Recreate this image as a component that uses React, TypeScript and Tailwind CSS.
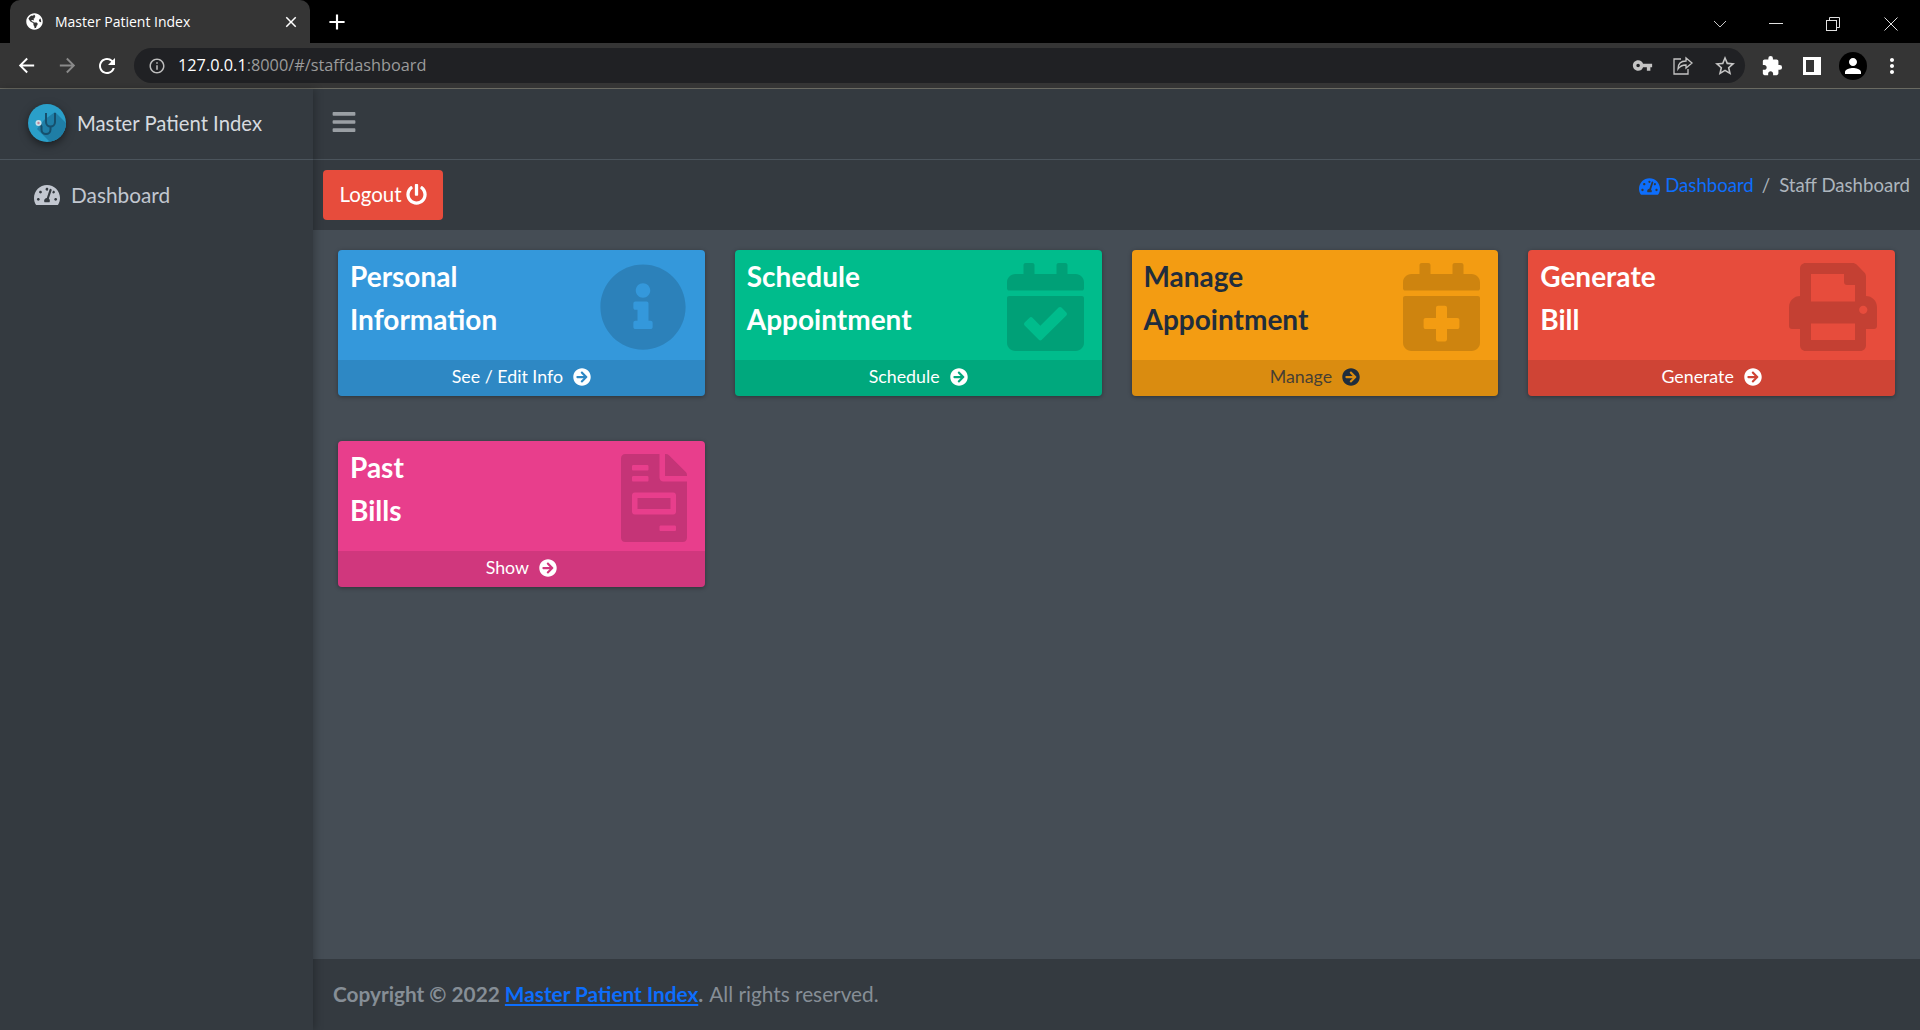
import { ReactNode } from 'react';
import {
  FaArrowCircleRight,
  FaBars,
  FaCalendarCheck,
  FaCalendarPlus,
  FaFileInvoice,
  FaGlobeAmericas,
  FaInfoCircle,
  FaPowerOff,
  FaPrint,
  FaTachometerAlt,
} from 'react-icons/fa';
import {
  MdAdd,
  MdArrowBack,
  MdArrowForward,
  MdClose,
  MdExtension,
  MdMoreVert,
  MdOutlineInfo,
  MdOutlineStarBorder,
  MdPerson,
  MdRefresh,
  MdVpnKey,
} from 'react-icons/md';

type Card = {
  title: [string, string];
  link: string;
  icon: ReactNode;
  bg: string;
  dark?: boolean;
};

const cards: Card[] = [
  {
    title: ['Personal', 'Information'],
    link: 'See / Edit Info',
    icon: <FaInfoCircle className="h-[88px] w-[88px]" />,
    bg: 'bg-[#3498db]',
  },
  {
    title: ['Schedule', 'Appointment'],
    link: 'Schedule',
    icon: <FaCalendarCheck className="h-[88px] w-[77px]" />,
    bg: 'bg-[#00bc8c]',
  },
  {
    title: ['Manage', 'Appointment'],
    link: 'Manage',
    icon: <FaCalendarPlus className="h-[88px] w-[77px]" />,
    bg: 'bg-[#f39c12]',
    dark: true,
  },
  {
    title: ['Generate', 'Bill'],
    link: 'Generate',
    icon: <FaPrint className="h-[88px] w-[88px]" />,
    bg: 'bg-[#e74c3c]',
  },
  {
    title: ['Past', 'Bills'],
    link: 'Show',
    icon: <FaFileInvoice className="h-[88px] w-[66px]" />,
    bg: 'bg-[#e83e8c]',
  },
];

function SmallBox({ card }: { card: Card }) {
  const textColor = card.dark ? 'text-[#1f2d3d]' : 'text-white';
  return (
    <div className={`relative h-[146px] overflow-hidden rounded-[4px] shadow-[0_1px_4px_rgba(0,0,0,0.35)] ${card.bg} ${textColor}`}>
      <div className="h-[110px] px-3 pt-[5px] text-[28px] leading-[43px] font-bold">
        <div>{card.title[0]}</div>
        <div>{card.title[1]}</div>
      </div>
      <div className="absolute top-[13px] right-[18px] text-black/15">{card.icon}</div>
      <div className="flex h-9 items-center justify-center gap-[10px] bg-black/10 pb-[3px] text-[17.8px]">
        <span className={card.dark ? 'opacity-80' : ''}>{card.link}</span>
        <FaArrowCircleRight size={18} />
      </div>
    </div>
  );
}

function Logo() {
  return (
    <div className="h-[38px] w-[38px] overflow-hidden rounded-full bg-[#2a9fc9] shadow-[0_3px_8px_rgba(0,0,0,0.5)]">
      <svg viewBox="0 0 38 38" className="h-full w-full" fill="none">
        <path d="M27 8 L40 21 V40 H24 L9 25 L16 16 Z" fill="#1f7ea6" />
        <path d="M18 9 v9 a4.5 4.5 0 0 0 9 0 v-9" stroke="#164f6c" strokeWidth="2" />
        <path d="M22.5 22.5 v3 a4.5 4.5 0 0 1 -9 0 v-3 a3 3 0 0 0 -2 -2" stroke="#164f6c" strokeWidth="2" />
        <circle cx="10.5" cy="19" r="3" fill="#c9dfe8" />
        <circle cx="10.5" cy="19" r="1.2" fill="#c2849a" />
      </svg>
    </div>
  );
}

function BrowserChrome() {
  return (
    <div className="flex h-[89px] shrink-0 flex-col border-b border-[#6a6a62] font-['Open_Sans','Liberation_Sans',sans-serif] text-white">
      <div className="flex h-[43px] items-end bg-black pl-[10px]">
        <div className="flex h-[43px] w-[300px] items-center rounded-t-[10px] bg-[#353535] pr-[10px] pl-4">
          <FaGlobeAmericas size={17} className="text-white" />
          <span className="ml-[12px] text-[14px]">Master Patient Index</span>
          <MdClose size={18} className="ml-auto" />
        </div>
        <div className="ml-[3px] flex h-[43px] w-[48px] items-center justify-center">
          <MdAdd size={26} />
        </div>
        <div className="ml-auto flex h-[38px] items-center">
          <svg width="14" height="8" viewBox="0 0 14 8" className="mr-[42px] text-[#c8c8c8]" fill="none" stroke="currentColor">
            <path d="M1 1l6 6 6-6" />
          </svg>
          <svg width="14" height="2" viewBox="0 0 14 2" className="mr-[43px] text-[#e0e0e0]" fill="currentColor">
            <rect width="14" height="1" />
          </svg>
          <svg width="14" height="14" viewBox="0 0 14 14" className="mr-[44px] text-[#e0e0e0]" fill="none" stroke="currentColor">
            <rect x="0.5" y="3.5" width="10" height="10" />
            <path d="M3.5 3.5v-3h10v10h-3" />
          </svg>
          <svg width="14" height="14" viewBox="0 0 14 14" className="mr-[22px] text-[#e0e0e0]" fill="none" stroke="currentColor">
            <path d="M0.5 0.5l13 13M13.5 0.5l-13 13" />
          </svg>
        </div>
      </div>
      <div className="flex h-[45px] items-center bg-[#353535] pr-[16px] pl-[15px]">
        <MdArrowBack size={23} />
        <MdArrowForward size={23} className="ml-[18px] text-[#8a8a8a]" />
        <MdRefresh size={24} className="ml-[16px]" />
        <div className="ml-[15px] flex h-[35px] flex-1 items-center rounded-full bg-[#202124] pl-[14px]">
          <MdOutlineInfo size={18} className="text-[#bdbdbd]" />
          <span className="ml-[12px] text-[16.3px]">
            127.0.0.1<span className="text-[#9b9b9b]">:8000/#/staffdashboard</span>
          </span>
          <div className="ml-auto flex items-center gap-[20px] pr-[8px] text-[#c4c4c4]">
            <MdVpnKey size={21} />
            <svg width="20" height="20" viewBox="0 0 20 20" fill="none" stroke="currentColor" strokeWidth="1.3">
              <path d="M8 3H1v15h14v-5" />
              <path d="M19 7l-6-5v3C8 5 5 8 5 13c2-3 4-4 8-4v3z" />
            </svg>
            <MdOutlineStarBorder size={24} />
          </div>
        </div>
        <div className="ml-[16px] flex items-center">
          <MdExtension size={22} />
          <svg width="18" height="18" viewBox="0 0 18 18" className="ml-[20px]">
            <path d="M0 0h18v18H0z M3 3v12h8V3z" fill="#fff" fillRule="evenodd" />
          </svg>
          <div className="ml-[18px] flex h-7 w-7 items-center justify-center rounded-full bg-black">
            <MdPerson size={24} />
          </div>
          <MdMoreVert size={24} className="ml-[13px]" />
        </div>
      </div>
    </div>
  );
}

export default function App() {
  return (
    <div className="flex h-[1030px] w-[1920px] flex-col overflow-hidden bg-[#343a40] font-['Lato','Liberation_Sans',sans-serif]">
      <BrowserChrome />
      <div className="flex min-h-0 flex-1">
        <aside className="z-10 w-[313px] shrink-0 bg-[#343a40] shadow-[2px_0_8px_rgba(0,0,0,0.25)]">
          <div className="flex h-[71px] items-center gap-[11px] border-b border-[#4b545c] pb-[2px] pl-[28px] text-[20.3px] text-[#d7dadf]">
            <Logo />
            <span>Master Patient Index</span>
          </div>
          <div className="mt-[19px] flex items-center gap-[11px] pl-[34px] text-[20.8px] text-[#c2c7d0]">
            <FaTachometerAlt size={26} />
            <span>Dashboard</span>
          </div>
        </aside>
        <main className="flex min-w-0 flex-1 flex-col">
          <div className="flex h-[71px] shrink-0 items-center border-b border-[#4b545c] pb-[4px] pl-[18px] text-[#9a9fa4]">
            <FaBars size={26} />
          </div>
          <div className="flex h-[70px] shrink-0 justify-between pt-[10px] pr-[10px] pl-[10px]">
            <button type="button" className="flex h-[50px] w-[120px] items-center justify-center gap-[4px] rounded-[4px] bg-[#e74c3c] pb-[2px] text-[20.5px] text-white">
              Logout <FaPowerOff size={21} />
            </button>
            <div className="mt-px flex h-[30px] items-center text-[18.6px] text-[#adb5bd]">
              <FaTachometerAlt size={21} className="mr-[5px] text-[#0d6efd]" />
              <span className="text-[#0d6efd]">Dashboard</span>
              <span className="mr-[9px] ml-[8px]">/</span>
              <span>Staff Dashboard</span>
            </div>
          </div>
          <div className="min-h-0 flex-1 bg-[#454d55] px-[25px] pt-[20px]">
            <div className="grid grid-cols-4 gap-x-[30px] gap-y-[45px]">
              {cards.map((card) => (
                <SmallBox key={card.link} card={card} />
              ))}
            </div>
          </div>
          <footer className="flex h-[71px] shrink-0 items-center pb-[2px] pl-[20px] text-[20.8px] text-[#868e96]">
            <span className="font-bold">
              Copyright © 2022 <span className="text-[#0d6efd] underline">Master Patient Index</span>.
            </span>
            <span className="ml-[6px]">All rights reserved.</span>
          </footer>
        </main>
      </div>
    </div>
  );
}
